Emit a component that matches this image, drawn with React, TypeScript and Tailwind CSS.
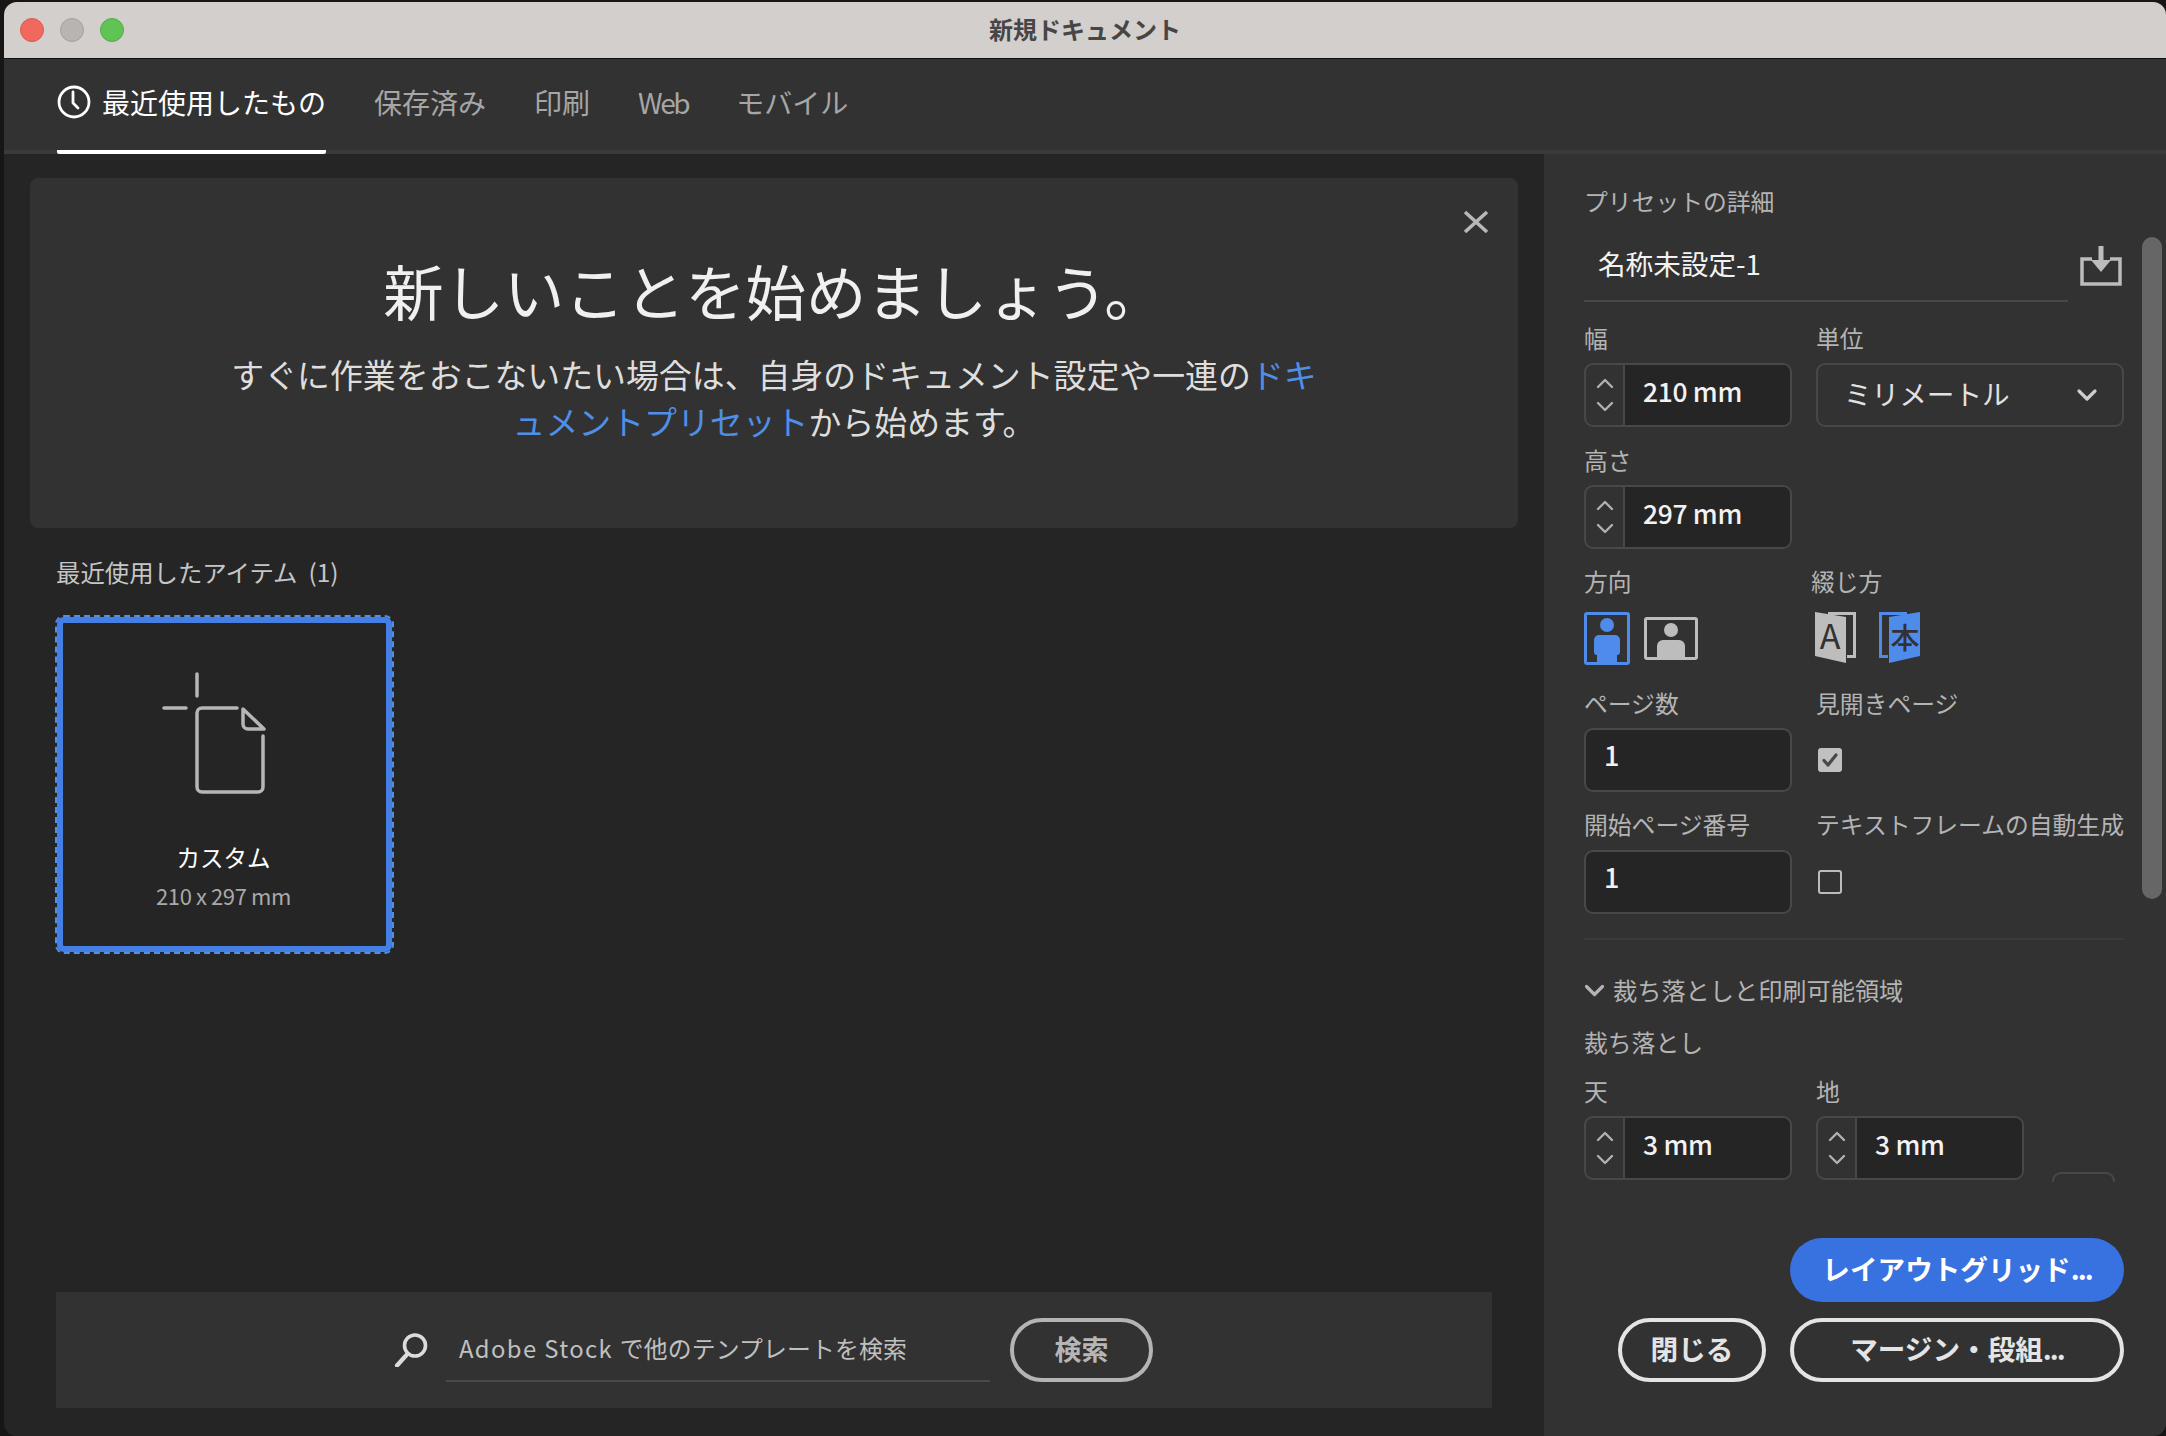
import React from "react";

const Chevron = ({ up, className }: { up?: boolean; className?: string }) => (
  <svg width="18" height="11" viewBox="0 0 18 11" className={className} fill="none" stroke="currentColor" strokeWidth="2.4" strokeLinecap="round" strokeLinejoin="round">
    <path d={up ? "M2 9 L9 2 L16 9" : "M2 2 L9 9 L16 2"} />
  </svg>
);

const Label = ({ children, className = "" }: { children: React.ReactNode; className?: string }) => (
  <div className={`text-[23.8px] leading-[34px] text-[#b4b4b4] whitespace-nowrap ${className}`}>{children}</div>
);

const Stepper = ({ value }: { value: string }) => (
  <div className="flex h-[64px] w-[208px] overflow-hidden rounded-[9px] border-2 border-[#484848]">
    <div className="flex w-[39px] shrink-0 flex-col items-center justify-center gap-[12px] border-r-2 border-[#484848] text-[#b0b0b0]">
      <Chevron up />
      <Chevron />
    </div>
    <div className="flex flex-1 items-center bg-[#252525] pb-[8px] pl-[18px] text-[26.4px] font-medium tracking-[-0.3px] text-[#f2f2f2]">{value}</div>
  </div>
);

const PlainInput = () => (
  <div className="flex h-[64px] w-[208px] items-center rounded-[9px] border-2 border-[#484848] bg-[#252525] pb-[9px] pl-[18px] text-[27px] font-medium text-[#f2f2f2]">1</div>
);

const DocIcon = () => (
  <svg width="106" height="124" viewBox="0 0 106 124" fill="none" stroke="#b6b6b6" strokeWidth="3.5" strokeLinecap="round" strokeLinejoin="round" className="ml-[-20px]">
    <path d="M35 2 V24" />
    <path d="M2 36 H24" />
    <path d="M75 36 H40 a5 5 0 0 0 -5 5 V115 a5 5 0 0 0 5 5 H96 a5 5 0 0 0 5 -5 V64" />
    <path d="M81 37 L102 57 H86 a5 5 0 0 1 -5 -5 Z" />
  </svg>
);

export default function App() {
  return (
    <div className="h-[1436px] w-[2166px] overflow-hidden bg-[#161616] pl-[4px] pt-[2px] [font-family:'Noto_Sans_CJK_JP','Noto_Sans',sans-serif]">
      <div className="flex h-[1434px] w-[2162px] flex-col overflow-hidden rounded-[13px] bg-[#252525]">
        {/* title bar */}
        <div className="relative flex h-[57px] shrink-0 items-center justify-center border-b-[1px] border-[#111] bg-[#d3cfcc]">
          <div className="absolute left-[16px] top-[16px] flex gap-[16px]">
            <span className="h-[24px] w-[24px] rounded-full border border-[#d9584e] bg-[#f1695e]" />
            <span className="h-[24px] w-[24px] rounded-full border border-[#a5a09d] bg-[#b9b4b1]" />
            <span className="h-[24px] w-[24px] rounded-full border border-[#52ad48] bg-[#5fc454]" />
          </div>
          <span className="pb-[3px] text-[24px] font-semibold text-[#464646]">新規ドキュメント</span>
        </div>

        {/* tabs */}
        <div className="flex h-[95px] shrink-0 items-stretch gap-[48px] border-b-4 border-[#3b3b3b] bg-[#323232] pl-[53px]">
          <div className="-mb-[4px] flex items-center gap-[11px] rounded-b-[2px] border-b-4 border-white pb-[5px] text-white">
            <svg width="34" height="34" viewBox="0 0 34 34" fill="none" stroke="currentColor" strokeWidth="2.8" strokeLinecap="round" strokeLinejoin="round">
              <circle cx="17" cy="17" r="15" />
              <path d="M16 7 V18 L21 23" />
            </svg>
            <span className="text-[28px] leading-none">最近使用したもの</span>
          </div>
          <div className="flex items-center pb-[5px] text-[28px] leading-none text-[#a6a6a6]">保存済み</div>
          <div className="flex items-center pb-[5px] text-[28px] leading-none text-[#a6a6a6]">印刷</div>
          <div className="flex items-center pb-[5px] text-[28px] leading-none tracking-[-2.4px] text-[#a6a6a6]">Web</div>
          <div className="flex items-center pb-[5px] text-[28px] leading-none text-[#a6a6a6]">モバイル</div>
        </div>

        {/* body */}
        <div className="flex min-h-0 flex-1">
          {/* left */}
          <div className="flex w-[1540px] shrink-0 flex-col bg-[#252525]">
            <div className="relative mx-[26px] mt-[24px] flex h-[350px] flex-col items-center rounded-[8px] bg-[#323232] pt-[72px]">
              <svg width="26" height="24" viewBox="0 0 26 24" fill="none" stroke="#b8b8b8" strokeWidth="3.6" className="absolute right-[29px] top-[32px]">
                <path d="M2 2 L24 22 M24 2 L2 22" />
              </svg>
              <h1 className="text-[60.4px] font-normal leading-[80px] text-[#f0f0f0]">新しいことを始めましょう。</h1>
              <p className="mt-[20px] text-center text-[32.9px] leading-[47px] text-[#dedede]">
                すぐに作業をおこないたい場合は、自身のドキュメント設定や一連の<span className="text-[#4f8fe8]">ドキ</span>
                <br />
                <span className="text-[#4f8fe8]">ュメントプリセット</span>から始めます。
              </p>
            </div>

            <div className="ml-[52px] mt-[27px] text-[24.4px] leading-[34px] text-[#c6c6c6]">最近使用したアイテム&nbsp;&nbsp;(1)</div>

            <div className="ml-[53px] mt-[28px] flex h-[335px] w-[335px] flex-col items-center rounded-[7px] border-[6px] border-[#467fe3] bg-[#252525] pt-[49px] outline-2 outline-dashed outline-[#4f8fe8]">
              <DocIcon />
              <div className="mt-[44px] -translate-x-[1px] text-[23.5px] leading-[34px] text-white">カスタム</div>
              <div className="mt-[4px] -translate-x-[1px] text-[22px] leading-[34px] tracking-[-0.4px] text-[#a9a9a9]">210 x 297 mm</div>
            </div>

            <div className="mb-[28px] ml-[52px] mr-[52px] mt-auto flex h-[116px] items-center bg-[#323232] pl-[338px]">
              <svg width="34" height="34" viewBox="0 0 34 34" fill="none" stroke="#dcdcdc" strokeLinecap="round">
                <circle cx="21" cy="12.5" r="10.5" strokeWidth="3.6" />
                <path d="M12.5 22 L3 32.5" strokeWidth="4.2" />
              </svg>
              <div className="ml-[18px] flex h-[64px] w-[544px] items-center border-b-2 border-[#4a4a4a] pb-[2px] pl-[13px] text-[23.8px] tracking-[0.2px] text-[#c0c0c0]">
                <span className="tracking-[1.4px]">Adobe Stock&nbsp;</span>で他のテンプレートを検索
              </div>
              <button className="ml-[20px] h-[64px] w-[143px] rounded-full border-[4px] border-[#b4b4b4] pb-[2px] text-[27px] font-bold text-[#b6b6b6]">検索</button>
            </div>
          </div>

          {/* right */}
          <div className="relative flex min-w-0 flex-1 flex-col bg-[#323232] pl-[40px] pr-[42px]">
            <div className="absolute right-[4px] top-[83px] h-[662px] w-[20px] rounded-full bg-[#666]" />

            <div className="h-[1028px] shrink-0 overflow-hidden pt-[30px]">
              <Label>プリセットの詳細</Label>

              <div className="mt-[9px] flex items-start">
                <div className="flex h-[75px] w-[484px] items-center border-b-2 border-[#484848] pl-[14px] text-[27.6px] text-[#f2f2f2]">名称未設定-1</div>
                <svg width="42" height="40" viewBox="0 0 42 40" fill="none" className="ml-[12px] mt-[19px]">
                  <path d="M12 13 H2 V38 H40 V13 H30" stroke="#bcbcbc" strokeWidth="3.5" />
                  <path d="M18.5 0 H23.5 V14 H31 L21 26 L11 14 H18.5 Z" fill="#bcbcbc" />
                </svg>
              </div>

              <div className="mt-[19px] flex gap-[24px]">
                <div className="w-[208px]">
                  <Label>幅</Label>
                  <div className="mt-[8px]"><Stepper value="210 mm" /></div>
                </div>
                <div className="w-[308px]">
                  <Label>単位</Label>
                  <div className="mt-[8px] flex h-[64px] items-center justify-between rounded-[9px] border-2 border-[#484848] pl-[26px] pr-[24px] text-[27.6px] text-[#e2e2e2]">
                    <span className="pb-[2px]">ミリメートル</span>
                    <svg width="22" height="14" viewBox="0 0 22 14" fill="none" stroke="#cdcdcd" strokeWidth="3.2" strokeLinecap="round" strokeLinejoin="round">
                      <path d="M3 3 L11 11 L19 3" />
                    </svg>
                  </div>
                </div>
              </div>

              <Label className="mt-[16px]">高さ</Label>
              <div className="mt-[8px]"><Stepper value="297 mm" /></div>

              <div className="mt-[15px] flex">
                <div className="w-[227px]">
                  <Label>方向</Label>
                  <div className="mt-[14px] flex items-center gap-[14px]">
                    <svg width="46" height="53" viewBox="0 0 46 53" fill="#4f8bea">
                      <rect x="1.5" y="1.5" width="43" height="50" rx="1.5" fill="none" stroke="#4f8bea" strokeWidth="3" />
                      <circle cx="23" cy="13" r="7" />
                      <path d="M15 23 H31 a5 5 0 0 1 5 5 V40 a3 3 0 0 1 -3 3 H33 V53 H13 V43 H13 a3 3 0 0 1 -3 -3 V28 a5 5 0 0 1 5 -5 Z" />
                    </svg>
                    <svg width="54" height="43" viewBox="0 0 54 43" fill="#bdbdbd">
                      <rect x="1.5" y="1.5" width="51" height="40" rx="1.5" fill="none" stroke="#bdbdbd" strokeWidth="3" />
                      <circle cx="27" cy="13" r="7" />
                      <path d="M19 23 H35 a6 6 0 0 1 6 6 V42 H13 V29 a6 6 0 0 1 6 -6 Z" />
                    </svg>
                  </div>
                </div>
                <div>
                  <Label>綴じ方</Label>
                  <div className="ml-[3px] mt-[14px] flex items-center gap-[23px]">
                    <svg width="42" height="52" viewBox="0 0 42 52">
                      <path d="M14 1.5 H40.5 V44.5 H33" fill="none" stroke="#bdbdbd" strokeWidth="3" />
                      <path d="M1 0 L32 5 V51 L1 44 Z" fill="#bdbdbd" />
                      <text x="16" y="37" textAnchor="middle" fontSize="34" fontWeight="400" fill="#323232" fontFamily="'Noto Sans CJK JP', sans-serif">A</text>
                    </svg>
                    <svg width="42" height="52" viewBox="0 0 42 52">
                      <path d="M28 1.5 H1.5 V44.5 H9" fill="none" stroke="#4f8bea" strokeWidth="3" />
                      <path d="M41 0 L10 5 V51 L41 44 Z" fill="#4f8bea" />
                      <text x="26" y="37" textAnchor="middle" fontSize="29" fontWeight="500" fill="#323232" fontFamily="'Noto Sans CJK JP', sans-serif">本</text>
                    </svg>
                  </div>
                </div>
              </div>

              <div className="mt-[21px] flex gap-[24px]">
                <div className="w-[208px]">
                  <Label>ページ数</Label>
                  <div className="mt-[8px]"><PlainInput /></div>
                </div>
                <div>
                  <Label>見開きページ</Label>
                  <div className="ml-[2px] mt-[28px] flex h-[24px] w-[24px] items-center justify-center rounded-[3px] bg-[#c0c0c0]">
                    <svg width="16" height="14" viewBox="0 0 16 14" fill="none" stroke="#484848" strokeWidth="3.2" strokeLinecap="round" strokeLinejoin="round">
                      <path d="M2 7.5 L6 12 L14 2" />
                    </svg>
                  </div>
                </div>
              </div>

              <div className="mt-[15px] flex gap-[24px]">
                <div className="w-[208px]">
                  <Label>開始ページ番号</Label>
                  <div className="mt-[9px]"><PlainInput /></div>
                </div>
                <div>
                  <Label className="text-[23.6px]">テキストフレームの自動生成</Label>
                  <div className="ml-[2px] mt-[29px] h-[24px] w-[24px] rounded-[3px] border-2 border-[#bcbcbc]" />
                </div>
              </div>

              <div className="mt-[24px] h-[2px] bg-[#3b3b3b]" />

              <div className="mt-[33px] flex items-center gap-[8px] text-[#b4b4b4]">
                <svg width="21" height="13" viewBox="0 0 21 13" fill="none" stroke="currentColor" strokeWidth="3.2" strokeLinecap="round" strokeLinejoin="round">
                  <path d="M2.5 2.5 L10.5 10.5 L18.5 2.5" />
                </svg>
                <Label className="text-[24.2px]">裁ち落としと印刷可能領域</Label>
              </div>
              <Label className="mt-[18px]">裁ち落とし</Label>

              <div className="mt-[15px] flex items-start gap-[24px]">
                <div className="w-[208px]">
                  <Label>天</Label>
                  <div className="mt-[8px]"><Stepper value="3 mm" /></div>
                </div>
                <div className="w-[208px]">
                  <Label>地</Label>
                  <div className="mt-[8px]"><Stepper value="3 mm" /></div>
                </div>
                <div className="ml-[4px] mt-[98px] h-[64px] w-[63px] rounded-[9px] border-2 border-[#484848]" />
              </div>
            </div>

            <div className="mt-[56px] flex flex-col items-end gap-[16px]">
              <button className="h-[64px] w-[334px] rounded-full bg-[#3871e0] pb-[2px] text-[27.6px] font-bold text-white">
                レイアウトグリッド<span className="tracking-[-2px]">...</span>
              </button>
              <div className="flex gap-[24px]">
                <button className="h-[64px] w-[148px] rounded-full border-[4px] border-[#e4e4e4] pb-[2px] text-[27.6px] font-bold text-[#e4e4e4]">閉じる</button>
                <button className="h-[64px] w-[334px] rounded-full border-[4px] border-[#e4e4e4] pb-[2px] text-[27.6px] font-bold text-[#e4e4e4]">
                  マージン・段組<span className="tracking-[-2px]">...</span>
                </button>
              </div>
            </div>
          </div>
        </div>
      </div>
    </div>
  );
}
